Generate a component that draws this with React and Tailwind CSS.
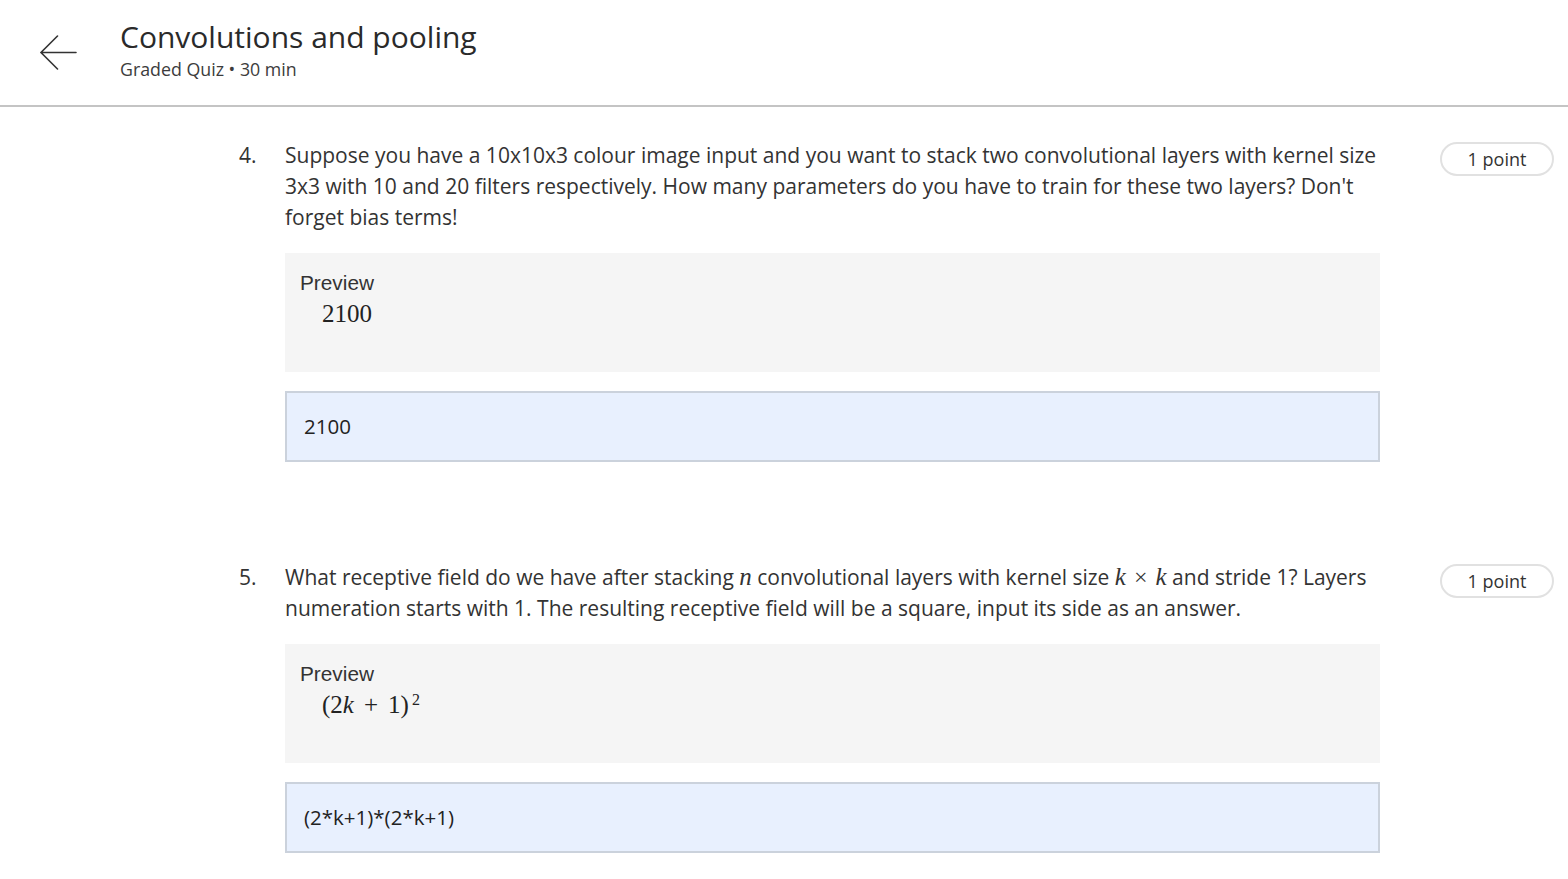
import React from 'react';

const sans = { fontFamily: '"Open Sans", "Liberation Sans", sans-serif' };

function M({ children, italic }) {
    return (
        <span className={`font-['Liberation_Serif',serif] text-[25px] leading-none ${italic ? 'italic' : ''}`}>{children}</span>
    );
}

function PointBadge() {
    return (
        <div className="shrink-0 w-[114px] h-[34px] mt-[2px] rounded-full border-2 border-[#e1e1e1] flex items-center justify-center text-[18px] text-[#333]">
            1 point
        </div>
    );
}

function Question({ num, children, preview, answer }) {
    return (
        <div className="flex">
            <div className="w-[46px] shrink-0 text-[21px] leading-[31px] text-[#333]">{num}.</div>
            <div className="w-[1095px] shrink-0">
                <div className="text-[21px] leading-[31px] text-[#333] whitespace-nowrap">{children}</div>
                <div className="mt-[20px] h-[119px] bg-[#f5f5f5] pl-[15px] pt-[17px]">
                    <div className="font-['Liberation_Sans',sans-serif] text-[20.8px] leading-[26px] text-[#333]">Preview</div>
                    <div className="pl-[22px] h-[34px] flex items-center text-[#222]">{preview}</div>
                </div>
                <div className="mt-[19px] h-[71px] bg-[#e8f0fe] border-2 border-[#cbd2dc] flex items-center pl-[17px] text-[20.5px] text-[#222]">
                    {answer}
                </div>
            </div>
            <div className="ml-[60px]">
                <PointBadge />
            </div>
        </div>
    );
}

export default function App() {
    return (
        <div className="w-[1568px] h-[879px] bg-white overflow-hidden" style={sans}>
            <header className="h-[107px] border-b-2 border-[#c4c4c4] flex items-start">
                <div className="pt-[35px] pl-[39px]">
                    <svg width="38" height="36" viewBox="0 0 38 36" fill="none" stroke="#333" strokeWidth="1.6" strokeLinecap="round">
                        <path d="M37 17.5H2M18.5 1L2 17.5L18.5 34" />
                    </svg>
                </div>
                <div className="ml-[43px] pt-[17px]">
                    <h1 className="text-[30px] leading-[40px] text-[#2a2a2a]">Convolutions and pooling</h1>
                    <p className="text-[17.8px] leading-[24px] text-[#3c3c3c]">Graded Quiz • 30 min</p>
                </div>
            </header>

            <main className="pl-[239px] pt-[33px]">
                <Question
                    num={4}
                    preview={<M>2100</M>}
                    answer="2100"
                >
                    Suppose you have a 10x10x3 colour image input and you want to stack two convolutional layers with kernel size
                    <br />
                    3x3 with 10 and 20 filters respectively. How many parameters do you have to train for these two layers? Don't
                    <br />
                    forget bias terms!
                </Question>

                <div className="h-[100px]" />

                <Question
                    num={5}
                    preview={
                        <M>
                            (2<i>k</i>
                            <span className="mx-[10px]">+</span>1)
                            <sup className="text-[16px] relative -top-[8px] ml-[3px]">2</sup>
                        </M>
                    }
                    answer="(2*k+1)*(2*k+1)"
                >
                    What receptive field do we have after stacking <M italic>n</M> convolutional layers with kernel size{' '}
                    <M italic>k</M>
                    <span className="font-['Liberation_Serif',serif] text-[24px] leading-none mx-[8px]">×</span>
                    <M italic>k</M> and stride 1? Layers
                    <br />
                    numeration starts with 1. The resulting receptive field will be a square, input its side as an answer.
                </Question>
            </main>
        </div>
    );
}
